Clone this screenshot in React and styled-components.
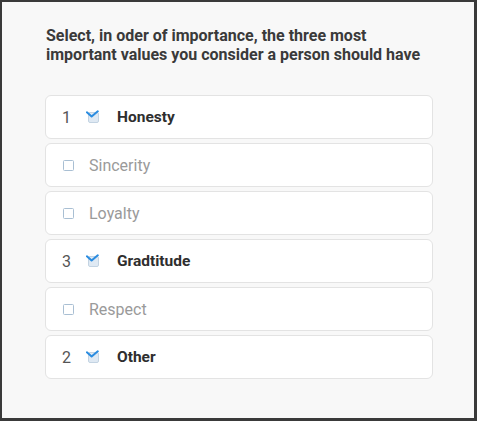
import React from 'react';
import styled, { createGlobalStyle } from 'styled-components';

const GlobalStyle = createGlobalStyle`
  html, body {
    margin: 0;
    padding: 0;
    background: #f8f8f8;
  }
  * {
    box-sizing: border-box;
  }
`;

const options = [
  { id: 'honesty', label: 'Honesty', rank: 1 },
  { id: 'sincerity', label: 'Sincerity' },
  { id: 'loyalty', label: 'Loyalty' },
  { id: 'gratitude', label: 'Gradtitude', rank: 3 },
  { id: 'respect', label: 'Respect' },
  { id: 'other', label: 'Other', rank: 2 },
];

const CheckedBox = () => (
  <svg width="14" height="13" viewBox="0 0 14 13">
    <rect x="2.5" y="2.5" width="10" height="10" rx="1.5" fill="#dfe9f3" stroke="#c3d3e2" />
    <path d="M0.9 2.3 L5.6 6.5 L11.8 1.3" fill="none" stroke="#2a8ce0" strokeWidth="2" strokeLinecap="round" strokeLinejoin="round" />
  </svg>
);

const App = () => (
  <>
    <GlobalStyle />
    <Frame>
      <Title>
        Select, in oder of importance, the three most important values you consider a person should have
      </Title>
      <OptionList>
        {options.map((opt) => {
          const checked = opt.rank != null;
          return (
            <OptionCard key={opt.id}>
              {checked && <Rank>{opt.rank}</Rank>}
              {checked ? <CheckWrap><CheckedBox /></CheckWrap> : <EmptyBox />}
              <Label checked={checked}>{opt.label}</Label>
            </OptionCard>
          );
        })}
      </OptionList>
    </Frame>
  </>
);

const Frame = styled.div`
  width: 477px;
  height: 421px;
  border: 2px solid #3a3a3a;
  border-right-width: 3px;
  border-bottom-width: 3px;
  background: #f8f8f8;
  padding: 24px 41px 0 43px;
  font-family: Roboto, "Liberation Sans", Arial, sans-serif;
`;

const Title = styled.div`
  font-size: 16px;
  font-weight: 700;
  line-height: 19px;
  color: #3a3a3a;
  margin: 0 0 31px 1px;
  width: 385px;
`;

const OptionList = styled.div`
  display: flex;
  flex-direction: column;
  gap: 4px;
`;

const OptionCard = styled.div`
  height: 44px;
  background: #ffffff;
  border: 1px solid #e3e3e3;
  border-radius: 6px;
  display: flex;
  align-items: center;
  padding-left: 16px;
`;

const Rank = styled.span`
  font-size: 16px;
  color: #555;
  width: 24px;
`;

const CheckWrap = styled.span`
  display: flex;
  width: 31px;
  margin-top: -1px;
`;

const EmptyBox = styled.span`
  width: 11px;
  height: 11px;
  border: 1.5px solid #a9bfd3;
  border-radius: 1.5px;
  margin: 0 15px 0 1px;
`;

const Label = styled.span`
  font-size: ${(p) => (p.checked ? '15.5px' : '16px')};
  font-weight: ${(p) => (p.checked ? 700 : 400)};
  color: ${(p) => (p.checked ? '#2e2e2e' : '#9a9a9a')};
`;

export default App;
